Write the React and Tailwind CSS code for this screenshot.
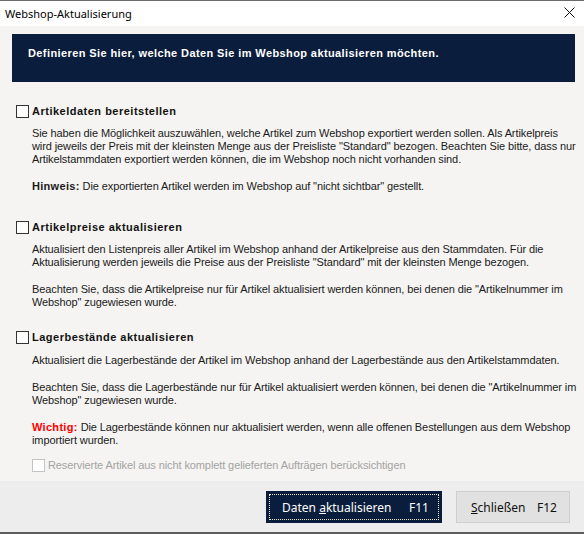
import React from "react";

const bodyFont = { fontFamily: '"Liberation Sans", "DejaVu Sans Condensed", sans-serif' };

function Box({ disabled }) {
  return (
    <span
      className={
        "block h-[13px] w-[13px] shrink-0 border bg-white " +
        (disabled ? "border-[#c4c4c4]" : "border-[#333333]")
      }
    />
  );
}

function OptionRow({ label, children }) {
  return (
    <div>
      <div className="flex h-[13px] items-center gap-[3px] pl-[16px]">
        <Box />
        <span className="font-bold tracking-[0.5px] text-[#111]">{label}</span>
      </div>
      <div className="pl-[32px]">{children}</div>
    </div>
  );
}

export default function App() {
  return (
    <div className="h-[534px] w-[584px] overflow-hidden bg-white text-[11px] leading-[13px] text-[#1a1a1a]">
      {/* title bar */}
      <div className="flex h-[26px] items-center justify-between border-t border-[#6b6b6b] bg-white pl-[5px] pr-[9px]">
        <span className="text-[11px] text-black" style={{ fontFamily: '"Noto Sans", sans-serif' }}>
          Webshop-Aktualisierung
        </span>
        <svg width="11" height="11" viewBox="0 0 11 11" className="mb-[2px]">
          <path d="M0.5 0.5 L10.5 10.5 M10.5 0.5 L0.5 10.5" stroke="#111" strokeWidth="1" />
        </svg>
      </div>

      {/* content */}
      <div className="h-[455px] bg-[#f5f4f2] pt-[8px] tracking-[-0.1px]" style={bodyFont}>
        <div className="ml-[12px] h-[48px] w-[563px] bg-[#0b1d3c] pl-[16px] pt-[13px] font-bold tracking-[0.4px] text-white">
          Definieren Sie hier, welche Daten Sie im Webshop aktualisieren möchten.
        </div>

        <div className="mt-[23px] whitespace-nowrap">
          <OptionRow label="Artikeldaten bereitstellen">
            <p className="mt-[9px]">
              Sie haben die Möglichkeit auszuwählen, welche Artikel zum Webshop exportiert werden sollen. Als Artikelpreis
              <br />
              wird jeweils der Preis mit der kleinsten Menge aus der Preisliste "Standard" bezogen. Beachten Sie bitte, dass nur
              <br />
              Artikelstammdaten exportiert werden können, die im Webshop noch nicht vorhanden sind.
            </p>
            <p className="mt-[14px]">
              <span className="font-bold tracking-[0.3px]">Hinweis:</span> Die exportierten Artikel werden im Webshop auf "nicht sichtbar" gestellt.
            </p>
          </OptionRow>

          <div className="mt-[28px]">
            <OptionRow label="Artikelpreise aktualisieren">
              <p className="mt-[9px]">
                Aktualisiert den Listenpreis aller Artikel im Webshop anhand der Artikelpreise aus den Stammdaten. Für die
                <br />
                Aktualisierung werden jeweils die Preise aus der Preisliste "Standard" mit der kleinsten Menge bezogen.
              </p>
              <p className="mt-[14px]">
                Beachten Sie, dass die Artikelpreise nur für Artikel aktualisiert werden können, bei denen die "Artikelnummer im
                <br />
                Webshop" zugewiesen wurde.
              </p>
            </OptionRow>
          </div>

          <div className="mt-[22px]">
            <OptionRow label="Lagerbestände aktualisieren">
              <p className="mt-[10px]">
                Aktualisiert die Lagerbestände der Artikel im Webshop anhand der Lagerbestände aus den Artikelstammdaten.
              </p>
              <p className="mt-[14px]">
                Beachten Sie, dass die Lagerbestände nur für Artikel aktualisiert werden können, bei denen die "Artikelnummer im
                <br />
                Webshop" zugewiesen wurde.
              </p>
              <p className="mt-[14px]">
                <span className="font-bold tracking-[0.3px] text-[#ff0000]">Wichtig:</span> Die Lagerbestände können nur aktualisiert werden, wenn alle offenen Bestellungen aus dem Webshop
                <br />
                importiert wurden.
              </p>
            </OptionRow>
          </div>

          <div className="mt-[12px] flex h-[13px] items-center gap-[3px] pl-[32px] text-[#a3a3a3]">
            <Box disabled />
            <span>Reservierte Artikel aus nicht komplett gelieferten Aufträgen berücksichtigen</span>
          </div>
        </div>
      </div>

      {/* footer */}
      <div
        className="flex h-[51px] items-start justify-end gap-[14px] bg-[#ededed] pr-[14px] pt-[10px] text-[12px]"
        style={{ fontFamily: '"Noto Sans", sans-serif' }}
      >
        <button className="flex h-[32px] w-[176px] items-center bg-[#0b1d3c] p-[3px] text-white">
          <span className="flex h-full w-full items-center justify-between border border-dotted border-[#f3e9c6] pl-[12px] pr-[9px]">
            <span>
              Daten <span className="underline">a</span>ktualisieren
            </span>
            <span>F11</span>
          </span>
        </button>
        <button className="flex h-[32px] w-[114px] items-center justify-between border border-[#cfcfcf] bg-[#e1e1e1] pl-[14px] pr-[12px] text-[#111]">
          <span>
            <span className="underline">S</span>chließen
          </span>
          <span>F12</span>
        </button>
      </div>
      <div className="h-[2px] bg-[#5c5c5c]" />
    </div>
  );
}
